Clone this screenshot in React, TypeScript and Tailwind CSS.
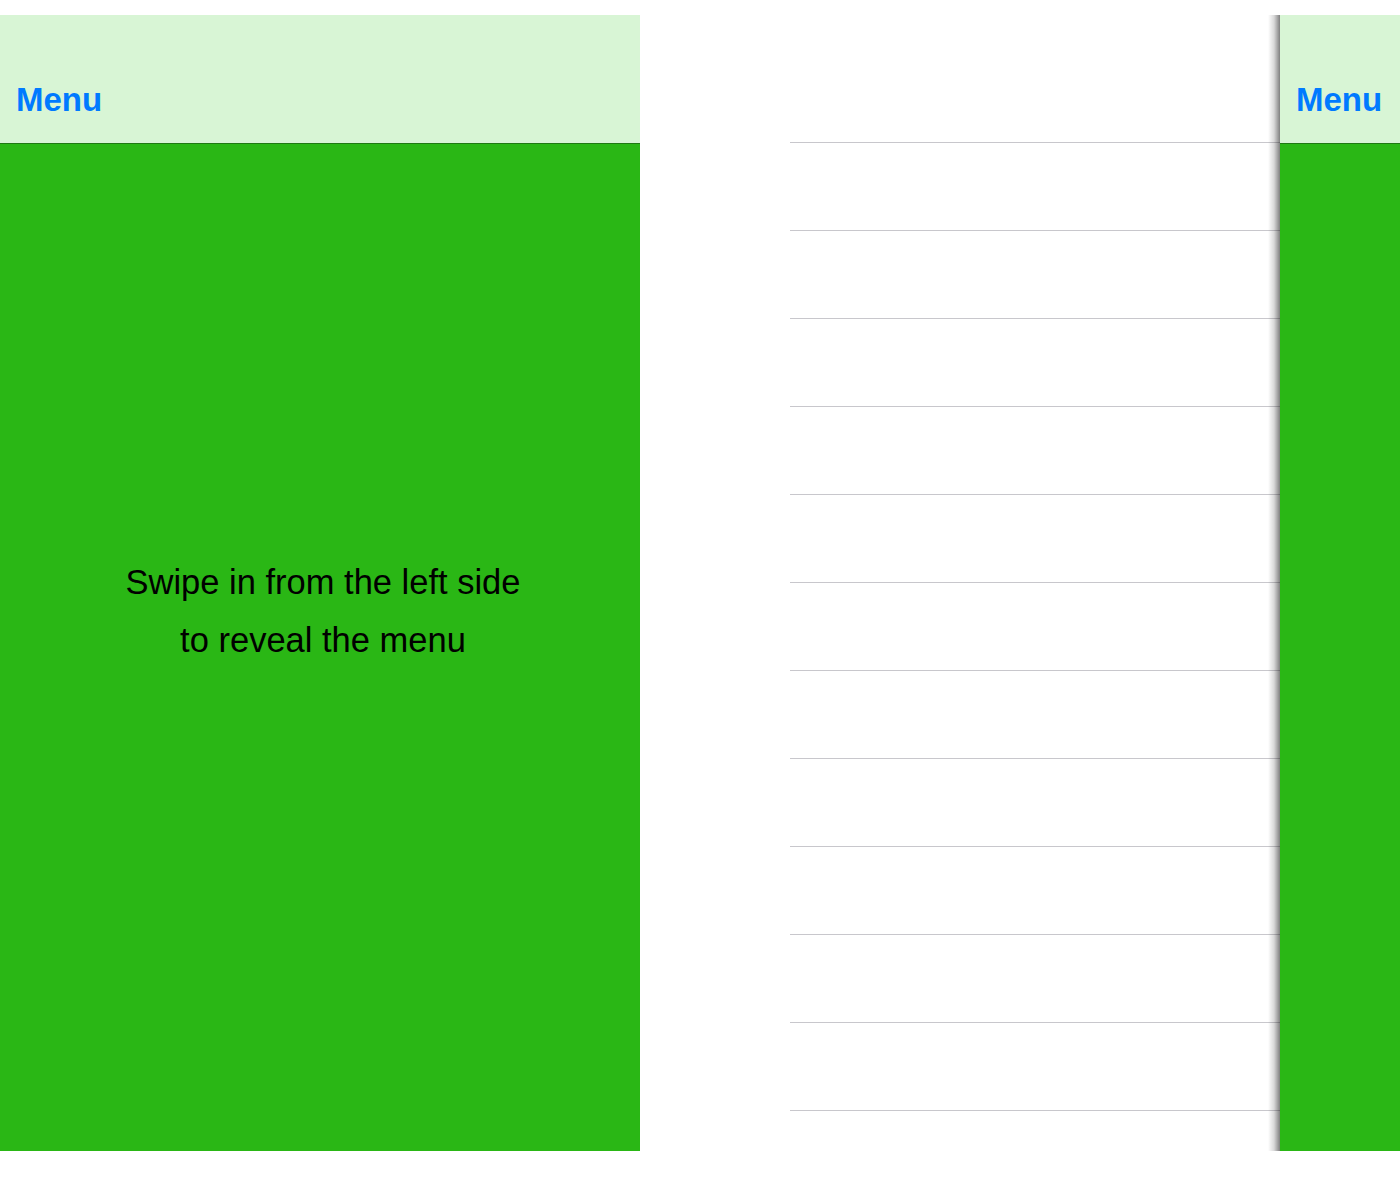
export default function App() {
  const rows = Array.from({ length: 11 });

  return (
    <div
      className="w-[1400px] h-[1200px] bg-white pt-[15px] flex overflow-hidden"
      style={{ fontFamily: '"Liberation Sans", Arial, sans-serif' }}
    >
      {/* main screen */}
      <div className="w-[640px] h-[1136px] flex flex-col shrink-0">
        <div className="h-[129px] bg-[#d8f5d5] border-b border-[#1e7a12] pt-[40px] shrink-0">
          <div className="h-[88px] flex items-center px-[16px]">
            <span className="text-[33px] font-bold text-[#007aff] leading-none">Menu</span>
          </div>
        </div>
        <div className="flex-1 bg-[#2ab715] flex justify-center pt-[409px]">
          <p className="text-[34.5px] leading-[58px] text-black text-center pl-[6px]">
            Swipe in from the left side
            <br />
            to reveal the menu
          </p>
        </div>
      </div>

      {/* menu table */}
      <div className="w-[150px] shrink-0" />
      <div className="w-[490px] shrink-0 pt-[127px] flex flex-col">
        {rows.map((_, i) => (
          <div key={i} className="h-[88px] border-t border-[#c8c7cc] shrink-0" />
        ))}
        <div className="h-px bg-[#c8c7cc] shrink-0" />
      </div>

      {/* slid-out screen */}
      <div className="relative z-10 w-[120px] h-[1136px] flex flex-col shrink-0">
        <div className="absolute top-0 bottom-0 -left-[12px] w-[12px] bg-gradient-to-l from-black/50 via-black/15 to-transparent" />
        <div className="h-[129px] bg-[#d8f5d5] border-b border-[#1e7a12] pt-[40px] shrink-0">
          <div className="h-[88px] flex items-center px-[16px]">
            <span className="text-[33px] font-bold text-[#007aff] leading-none">Menu</span>
          </div>
        </div>
        <div className="flex-1 bg-[#2ab715]" />
      </div>
    </div>
  );
}
